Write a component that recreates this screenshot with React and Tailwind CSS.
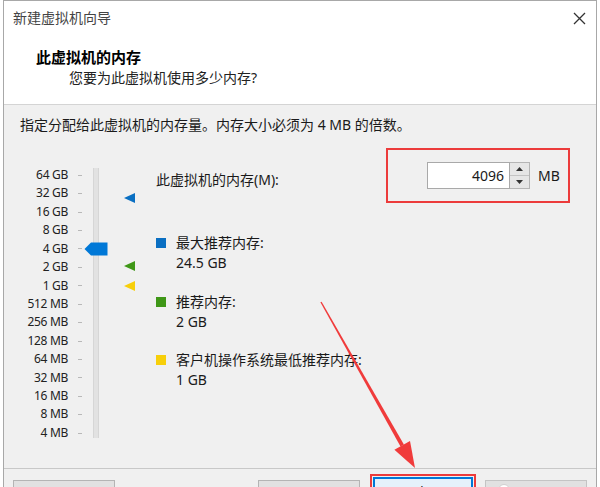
const sizes = [
  "64 GB", "32 GB", "16 GB", "8 GB", "4 GB", "2 GB", "1 GB",
  "512 MB", "256 MB", "128 MB", "64 MB", "32 MB", "16 MB", "8 MB", "4 MB",
];

// offsets from the top of the slider row, px
const markers = [
  { top: 27, color: "#0a6fc2" },
  { top: 95, color: "#3f9717" },
  { top: 115, color: "#f7cf0a" },
];

function Marker({ top, color }) {
  return (
    <svg className="absolute left-0" style={{ top }} width="11" height="10" viewBox="0 0 11 10">
      <polygon points="0,5 11,0 11,10" fill={color} />
    </svg>
  );
}

function Legend({ color, label, value, className }) {
  return (
    <div className={"flex gap-[10px] " + className}>
      <div className="w-[10px] h-[10px] mt-[5px]" style={{ background: color }} />
      <div className="leading-[20px]">
        <div>{label}</div>
        <div>{value}</div>
      </div>
    </div>
  );
}

function App() {
  return (
    <div
      className="relative w-[600px] h-[487px] overflow-hidden bg-white text-[14px] text-[#1a1a1a]"
      style={{ fontFamily: '"Noto Sans", "Noto Sans CJK SC", sans-serif' }}
    >
      <div className="ml-[3px] w-[594px] h-[487px] border-x border-t border-[#a8a8a8] flex flex-col">
        {/* header */}
        <div className="bg-white h-[104px] border-b border-[#d4d4d4] shrink-0">
          <div className="flex items-center h-[34px] pl-[9px] pr-[10px]">
            <span className="text-[#444] leading-[20px]">新建虚拟机向导</span>
            <svg className="ml-auto" width="13" height="13" viewBox="0 0 13 13">
              <path d="M1 1 L12 12 M12 1 L1 12" stroke="#333" strokeWidth="1.3" />
            </svg>
          </div>
          <div className="pl-[32px] mt-[12px] font-bold text-[15px] leading-[20px] text-black">此虚拟机的内存</div>
          <div className="pl-[65px] mt-[1px] leading-[20px] text-[#222]">您要为此虚拟机使用多少内存?</div>
        </div>

        {/* body */}
        <div className="flex-1 bg-[#f0f0f0] flex flex-col">
          <div className="pl-[16px] pt-[10px] leading-[20px]">指定分配给此虚拟机的内存量。内存大小必须为 4 MB 的倍数。</div>

          <div className="flex items-start">
            {/* slider */}
            <div className="flex mt-[31px]">
              <div className="w-[64px] flex flex-col text-right text-[12px] text-[#222]">
                {sizes.map((s) => (
                  <div key={s} className="h-[18.43px] leading-[18.43px] tracking-[-0.3px]">{s}</div>
                ))}
              </div>
              <div className="ml-[10px] w-[4px] flex flex-col">
                {sizes.map((s) => (
                  <div key={s} className="h-[18.43px] flex items-center">
                    <div className="w-[4px] h-px bg-[#b8b8b8]" />
                  </div>
                ))}
              </div>
              <div className="relative ml-[11px] mt-[2px] w-[6px] h-[270px] bg-[#e2e2e2] border-x border-[#d6d6d6]">
                <svg className="absolute left-[-10px] top-[74px]" width="24" height="14" viewBox="0 0 24 14">
                  <path d="M0.5 7 L7 0.5 H23.5 V13.5 H7 Z" fill="#0078d7" />
                </svg>
              </div>
              <div className="relative ml-[25px] w-[11px] h-[270px]">
                {markers.map((m) => (
                  <Marker key={m.top} top={m.top} color={m.color} />
                ))}
              </div>
            </div>

            {/* settings */}
            <div className="flex-1 ml-[21px] mt-[13px] flex flex-col">
              <div className="flex items-start">
                <span className="mt-[22px] leading-[20px]">此虚拟机的内存(M):</span>
                <div className="ml-auto mr-[26px] w-[184px] h-[55px] border-2 border-[#ec3b3b] flex items-center pl-[39px]">
                  <div className="w-[83px] h-[27px] bg-white border border-[#a9a9a9] flex items-center justify-end pr-[5px]">
                    4096
                  </div>
                  <div className="w-[20px] h-[27px] bg-[#e6e6e6] border-y border-r border-[#b5b5b5] flex flex-col">
                    <div className="flex-1 flex items-center justify-center border-b border-[#c4c4c4]">
                      <svg width="7" height="4" viewBox="0 0 7 4"><polygon points="3.5,0 7,4 0,4" fill="#333" /></svg>
                    </div>
                    <div className="flex-1 flex items-center justify-center">
                      <svg width="7" height="4" viewBox="0 0 7 4"><polygon points="0,0 7,0 3.5,4" fill="#333" /></svg>
                    </div>
                  </div>
                  <span className="ml-[8px]">MB</span>
                </div>
              </div>

              <Legend className="mt-[30px]" color="#0a6fc2" label="最大推荐内存:" value="24.5 GB" />
              <Legend className="mt-[19px]" color="#3f9717" label="推荐内存:" value="2 GB" />
              <Legend className="mt-[18px]" color="#f7cf0a" label="客户机操作系统最低推荐内存:" value="1 GB" />
            </div>
          </div>
        </div>

        {/* footer: buttons are cut off by the window edge */}
        <div className="h-[19px] shrink-0 bg-[#f0f0f0] border-t border-[#c8c8c8] flex items-start pt-[11px] relative">
          <div className="ml-[9px] w-[102px] h-[23px] bg-[#e1e1e1] border border-[#b4b4b4] text-center pt-[8px] leading-[14px]">帮助</div>
          <div className="ml-[143px] w-[102px] h-[23px] bg-[#e1e1e1] border border-[#b4b4b4] text-center pt-[8px] leading-[14px]">&lt; 上一步(B)</div>
          <div className="ml-[10px] -mt-[6px] w-[106px] h-[30px] border-2 border-[#ec3b3b] p-px">
            <div className="w-full h-full bg-[#e5f1fb] border-2 border-[#0078d7] text-center pt-[7px] leading-[14px]">下一步(N) &gt;</div>
          </div>
          <div className="ml-[9px] w-[102px] h-[23px] bg-[#e1e1e1] border border-[#c4c4c4] flex items-start pt-[3px] pl-[12px] gap-[8px] text-[#b0b0b0]">
            <div className="w-[12px] h-[12px] rounded-full bg-white border border-[#d0d0d0]" />
            <span className="leading-[14px] pt-[3px]">取消</span>
          </div>
        </div>
      </div>

      {/* red annotation arrow */}
      <svg className="absolute left-0 top-0 pointer-events-none" width="600" height="487" viewBox="0 0 600 487">
        <polygon points="320.4,302.3 321.6,301.7 403.9,444.4 400.5,446.4" fill="#f03b3b" />
        <polygon points="415,468 394.4,449.8 410,441" fill="#f03b3b" />
      </svg>
    </div>
  );
}

export default App;
